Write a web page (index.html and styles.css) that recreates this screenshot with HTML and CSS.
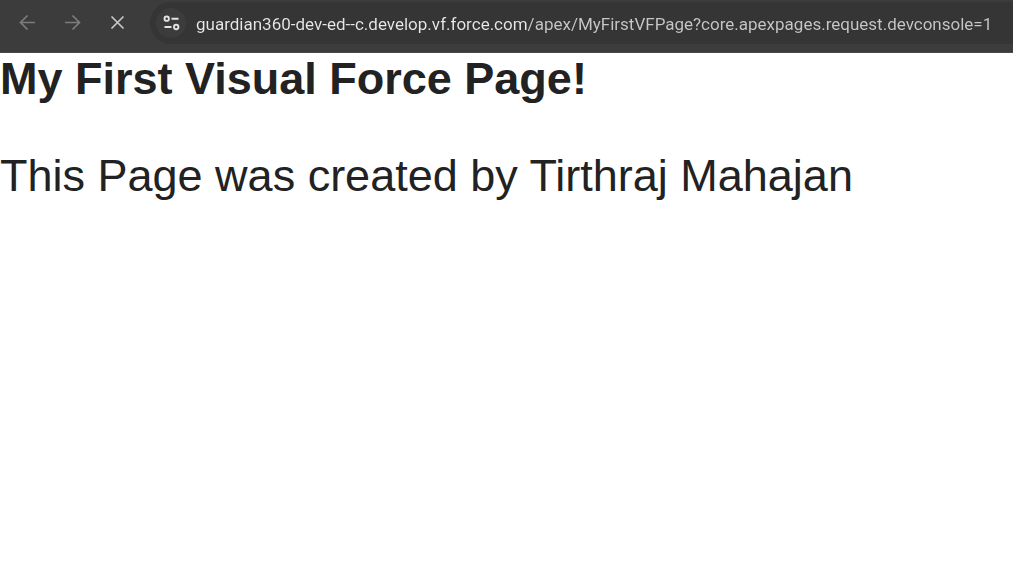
FILE: index.html
```html
<!DOCTYPE html>
<html lang="en">
<head>
<meta charset="utf-8">
<meta name="viewport" content="width=device-width, initial-scale=1">
<title>My First Visual Force Page!</title>
<link rel="stylesheet" href="styles.css">
</head>
<body>
<header class="toolbar">
  <nav class="nav" aria-label="Browser navigation">
    <button class="nav-button" type="button" aria-label="Back" disabled>
      <svg class="icon" viewBox="0 0 20 20"><path d="M17 9.5H3.5M9.5 2.5L2.5 9.5L9.5 16.5"/></svg>
    </button>
    <button class="nav-button" type="button" aria-label="Forward" disabled>
      <svg class="icon" viewBox="0 0 20 20"><path d="M2 9.5H15.5M9.5 2.5L16.5 9.5L9.5 16.5"/></svg>
    </button>
    <button class="nav-button" type="button" aria-label="Stop loading">
      <svg class="icon" viewBox="0 0 20 20"><path d="M3.5 3.5L15.5 15.5M15.5 3.5L3.5 15.5"/></svg>
    </button>
  </nav>
  <div class="address">
    <button class="site-info" type="button" aria-label="View site information">
      <svg class="icon icon-tune" viewBox="0 0 20 20"><circle cx="5.7" cy="5.7" r="2.2"/><path d="M10.5 5.7H17.5M3.5 14H10.5"/><circle cx="15.2" cy="14" r="2.2"/></svg>
    </button>
    <input class="url" type="text" aria-label="Address" spellcheck="false" value="guardian360-dev-ed--c.develop.vf.force.com/apex/MyFirstVFPage?core.apexpages.request.devconsole=1">
  </div>
</header>
<main class="page">
  <h1 class="title">My First Visual Force Page!</h1>
  <p class="text">This Page was created by Tirthraj Mahajan</p>
</main>
</body>
</html>
```
FILE: styles.css
```css
* {
  box-sizing: border-box;
}

body {
  margin: 0;
  background: #fff;
  color: #222;
  font-family: "Liberation Sans", Arial, sans-serif;
}

.toolbar {
  display: flex;
  align-items: center;
  gap: 14px;
  padding: 2px 0 8px 10px;
  background: #3c3c3c;
  border-bottom: 1px solid #4a4848;
}

.nav {
  display: flex;
  gap: 9px;
}

.nav-button,
.site-info {
  display: grid;
  place-items: center;
  flex: none;
  padding: 0;
  border: 0;
  background: none;
  color: #c7c7c7;
}

.nav-button {
  width: 36px;
  height: 36px;
}

.nav-button:disabled {
  color: #7c7c7c;
}

.icon {
  width: 20px;
  height: 20px;
  fill: none;
  stroke: currentColor;
  stroke-width: 1.7;
}

.address {
  display: flex;
  flex: 1;
  align-items: center;
  gap: 10px;
  min-width: 0;
  height: 42px;
  padding-left: 6px;
  border-radius: 21px 0 0 21px;
  background: #353535;
}

.site-info {
  width: 30px;
  height: 30px;
  border-radius: 50%;
  background: #3c3c3c;
  color: #e3e3e3;
}

.icon-tune {
  stroke-width: 1.9;
}

.url {
  flex: 1;
  min-width: 0;
  height: 32px;
  padding: 2px 0 0;
  border: 0;
  outline: 0;
  background: linear-gradient(to right, #e8e8e8 332px, #c7c7c7 332px);
  background-clip: text;
  color: transparent;
  font: 17px/30px Roboto, "Open Sans", sans-serif;
}

.title,
.text {
  margin: 0;
  font-size: 45px;
  line-height: 52px;
}

.title {
  margin-bottom: 45px;
  font-weight: 700;
}

.text {
  font-weight: 400;
}
```
